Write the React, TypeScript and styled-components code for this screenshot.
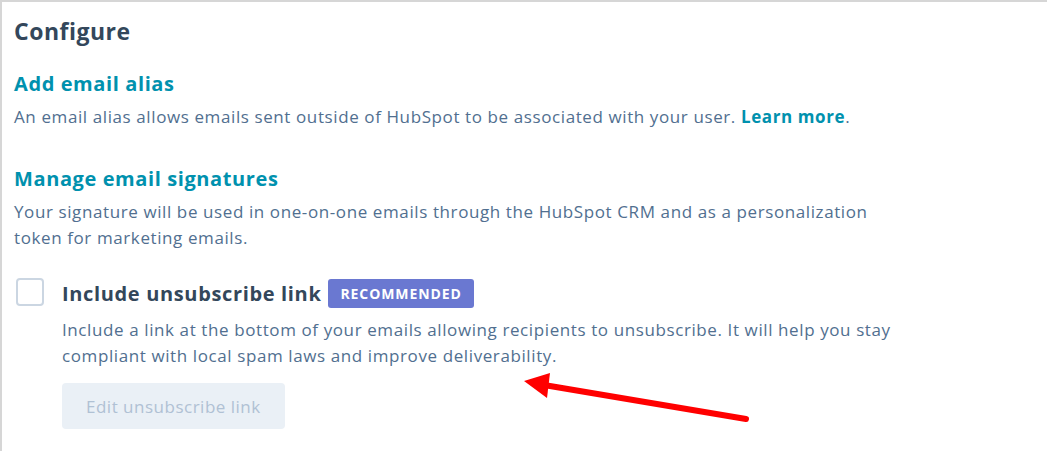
import * as React from 'react';
import styled, { createGlobalStyle } from 'styled-components';

const GlobalStyle = createGlobalStyle`
  html, body {
    margin: 0;
    padding: 0;
    background: #ffffff;
  }
  body {
    font-family: 'Open Sans', 'Liberation Sans', sans-serif;
    -webkit-font-smoothing: antialiased;
  }
`;

const Panel = styled.div`
  position: relative;
  width: 1047px;
  height: 451px;
  box-sizing: border-box;
  border-left: 2px solid #d6d6d6;
  border-top: 2px solid #d6d6d6;
  padding: 13px 0 0 12px;
  overflow: hidden;
`;

const PageTitle = styled.h2`
  margin: 0;
  font-size: 23px;
  line-height: 32px;
  font-weight: 700;
  letter-spacing: 0.5px;
  color: #33475b;
`;

const Section = styled.section<{ $gap: number }>`
  margin-top: ${(p) => p.$gap}px;
`;

const SectionTitle = styled.h3`
  margin: 0 0 6px;
  font-size: 20px;
  line-height: 28px;
  font-weight: 700;
  letter-spacing: 0.6px;
  color: #0091ae;
`;

const Body = styled.p`
  margin: 0;
  max-width: 860px;
  font-size: 17px;
  line-height: 26px;
  letter-spacing: 0.6px;
  color: #516f90;
`;

const Link = styled.a`
  color: #0091ae;
  font-weight: 700;
  text-decoration: none;
`;

const OptionRow = styled.div`
  display: flex;
  gap: 18px;
  margin-top: 27px;
  padding-left: 2px;
`;

const Checkbox = styled.span`
  flex: none;
  width: 28px;
  height: 28px;
  box-sizing: border-box;
  border: 2px solid #cbd6e2;
  border-radius: 4px;
  background: #ffffff;
`;

const OptionBody = styled.div`
  display: flex;
  flex-direction: column;
`;

const OptionHead = styled.div`
  display: flex;
  align-items: center;
  gap: 7px;
  height: 30px;
`;

const OptionLabel = styled.span`
  font-size: 20px;
  font-weight: 700;
  letter-spacing: 0.65px;
  color: #33475b;
`;

const Badge = styled.span`
  display: inline-flex;
  align-items: center;
  height: 29px;
  padding: 0 12px;
  border-radius: 3px;
  background: #6a78d1;
  color: #ffffff;
  font-size: 14px;
  font-weight: 700;
  letter-spacing: 0.9px;
  text-transform: uppercase;
`;

const OptionText = styled(Body)`
  margin-top: 9px;
  max-width: 840px;
`;

const DisabledButton = styled.button`
  align-self: flex-start;
  margin-top: 14px;
  height: 46px;
  padding: 0 24px;
  border: none;
  border-radius: 4px;
  background: #eaf0f6;
  color: #b0c1d4;
  font-family: inherit;
  font-size: 17px;
  letter-spacing: 0.5px;
  cursor: not-allowed;
`;

const ArrowOverlay = styled.svg`
  position: absolute;
  left: 0;
  top: 0;
  pointer-events: none;
`;

export default function App() {
  return (
    <>
      <GlobalStyle />
      <Panel>
        <PageTitle>Configure</PageTitle>
        <Section $gap={23}>
          <SectionTitle>Add email alias</SectionTitle>
          <Body>
            An email alias allows emails sent outside of HubSpot to be associated with your user.{' '}
            <Link href="#">Learn more</Link>.
          </Body>
        </Section>
        <Section $gap={35}>
          <SectionTitle>Manage email signatures</SectionTitle>
          <Body>
            Your signature will be used in one-on-one emails through the HubSpot CRM and as a
            personalization token for marketing emails.
          </Body>
        </Section>
        <OptionRow>
          <Checkbox role="checkbox" aria-checked="false" />
          <OptionBody>
            <OptionHead>
              <OptionLabel>Include unsubscribe link</OptionLabel>
              <Badge>Recommended</Badge>
            </OptionHead>
            <OptionText>
              Include a link at the bottom of your emails allowing recipients to unsubscribe. It will
              help you stay compliant with local spam laws and improve deliverability.
            </OptionText>
            <DisabledButton disabled>Edit unsubscribe link</DisabledButton>
          </OptionBody>
        </OptionRow>
        <ArrowOverlay width="1047" height="451" viewBox="0 0 1047 451">
          <line x1="744" y1="417" x2="542" y2="383" stroke="#ff0000" strokeWidth="6" strokeLinecap="round" />
          <polygon points="522,379 548,371 545,396" fill="#ff0000" />
        </ArrowOverlay>
      </Panel>
    </>
  );
}
